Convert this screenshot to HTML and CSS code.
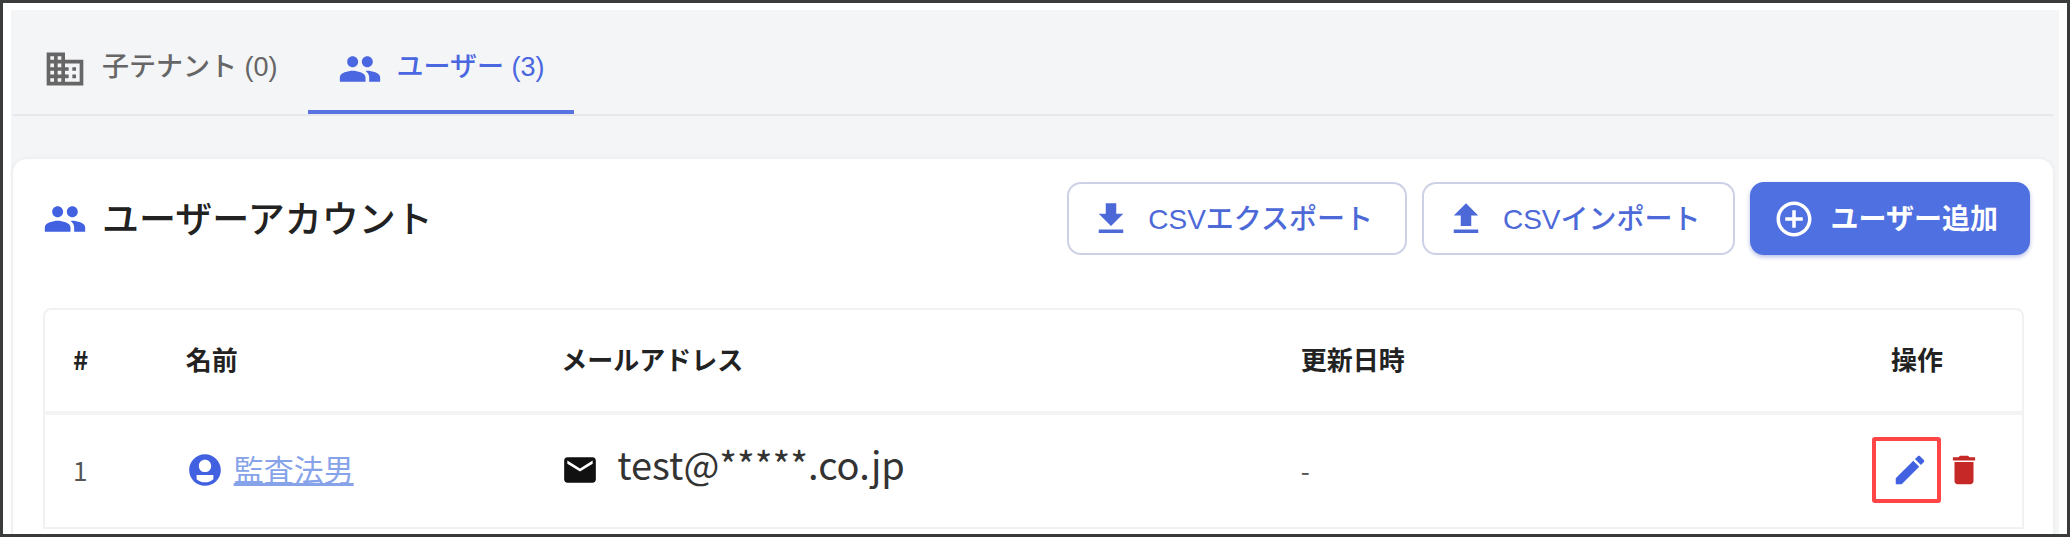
FILE: index.html
```html
<!DOCTYPE html>
<html lang="ja">
<head>
    <meta charset="UTF-8">
    <meta name="viewport" content="width=device-width, initial-scale=1.0">
    <title>ユーザーアカウント</title>
    <link rel="stylesheet" href="styles.css">
</head>
<body>
    <div class="frame">
        <div class="page">
            <nav class="tabs">
                <a class="tab" href="#tenants">
                    <svg class="icon-lg" viewBox="0 0 24 24" aria-hidden="true"><path d="M12 7V3H2v18h20V7H12zM6 19H4v-2h2v2zm0-4H4v-2h2v2zm0-4H4V9h2v2zm0-4H4V5h2v2zm4 12H8v-2h2v2zm0-4H8v-2h2v2zm0-4H8V9h2v2zm0-4H8V5h2v2zm10 12h-8v-2h2v-2h-2v-2h2v-2h-2V9h8v10zm-2-8h-2v2h2v-2zm0 4h-2v2h2v-2z"/></svg>
                    <span class="label">子テナント (0)</span>
                </a>
                <a class="tab active" href="#users" aria-current="page">
                    <svg class="icon-lg" viewBox="0 0 24 24" aria-hidden="true"><path d="M16 11c1.66 0 2.99-1.34 2.99-3S17.66 5 16 5c-1.66 0-3 1.34-3 3s1.34 3 3 3zm-8 0c1.66 0 2.99-1.34 2.99-3S9.66 5 8 5C6.34 5 5 6.34 5 8s1.34 3 3 3zm0 2c-2.33 0-7 1.17-7 3.5V19h14v-2.5c0-2.33-4.67-3.5-7-3.5zm8 0c-.29 0-.62.02-.97.05 1.16.84 1.97 1.97 1.97 3.45V19h6v-2.5c0-2.33-4.67-3.5-7-3.5z"/></svg>
                    <span class="label">ユーザー (3)</span>
                </a>
            </nav>

            <main class="card" id="users">
                <div class="card-header">
                    <h1 class="card-title">
                        <svg class="icon-lg" viewBox="0 0 24 24" aria-hidden="true"><path d="M16 11c1.66 0 2.99-1.34 2.99-3S17.66 5 16 5c-1.66 0-3 1.34-3 3s1.34 3 3 3zm-8 0c1.66 0 2.99-1.34 2.99-3S9.66 5 8 5C6.34 5 5 6.34 5 8s1.34 3 3 3zm0 2c-2.33 0-7 1.17-7 3.5V19h14v-2.5c0-2.33-4.67-3.5-7-3.5zm8 0c-.29 0-.62.02-.97.05 1.16.84 1.97 1.97 1.97 3.45V19h6v-2.5c0-2.33-4.67-3.5-7-3.5z"/></svg>
                        <span class="label">ユーザーアカウント</span>
                    </h1>
                    <div class="buttons">
                        <button class="btn" type="button">
                            <svg class="icon-md" viewBox="0 0 24 24" aria-hidden="true"><path d="M19 9h-4V3H9v6H5l7 7 7-7zM5 18v2h14v-2H5z"/></svg>
                            <span class="label">CSVエクスポート</span>
                        </button>
                        <button class="btn" type="button">
                            <svg class="icon-md" viewBox="0 0 24 24" aria-hidden="true"><path d="M9 16h6v-6h4l-7-7-7 7h4zm-4 2h14v2H5z"/></svg>
                            <span class="label">CSVインポート</span>
                        </button>
                        <button class="btn btn-primary" type="button">
                            <svg class="icon-md" viewBox="0 0 24 24" aria-hidden="true"><path d="M13 7h-2v4H7v2h4v4h2v-4h4v-2h-4V7zm-1-5C6.48 2 2 6.48 2 12s4.48 10 10 10 10-4.48 10-10S17.52 2 12 2zm0 18c-4.41 0-8-3.59-8-8s3.59-8 8-8 8 3.59 8 8-3.59 8-8 8z"/></svg>
                            <span class="label">ユーザー追加</span>
                        </button>
                    </div>
                </div>

                <div class="table-wrap">
                    <table class="users">
                        <thead>
                            <tr>
                                <th class="col-no">#</th>
                                <th class="col-name">名前</th>
                                <th class="col-mail">メールアドレス</th>
                                <th class="col-date">更新日時</th>
                                <th class="col-actions">操作</th>
                            </tr>
                        </thead>
                        <tbody>
                            <tr>
                                <td>1</td>
                                <td>
                                    <div class="cell name">
                                        <svg class="icon-sm" viewBox="0 0 24 24" aria-hidden="true"><path d="M12 2C6.48 2 2 6.48 2 12s4.48 10 10 10 10-4.48 10-10S17.52 2 12 2zm0 3.500c2.200 0 3.900 1.700 3.900 3.900s-1.700 3.900-3.900 3.900-3.900-1.700-3.900-3.900 1.700-3.900 3.900-3.900zm5.300 12.300c-1.300 1.300-3.200 2-5.300 2s-4-.7-5.300-2v-2.600h10.600z"/></svg>
                                        <a class="name-link" href="#user-1">監査法男</a>
                                    </div>
                                </td>
                                <td>
                                    <div class="cell mail">
                                        <svg class="icon-sm" viewBox="0 0 24 24" aria-hidden="true"><path d="M20 4H4c-1.100 0-1.990.9-1.990 2L2 18c0 1.100.9 2 2 2h16c1.100 0 2-.9 2-2V6c0-1.100-.9-2-2-2zm0 4l-8 5-8-5V6l8 5 8-5v2z"/></svg>
                                        <span class="mail-text">test@*****.co.jp</span>
                                    </div>
                                </td>
                                <td>-</td>
                                <td>
                                    <div class="cell actions">
                                        <button class="icon-btn edit" type="button" aria-label="編集">
                                            <svg class="icon-sm" viewBox="0 0 24 24" aria-hidden="true"><path d="M3 17.250V21h3.750L17.810 9.940l-3.750-3.750L3 17.250zM20.710 7.040c.39-.39.39-1.020 0-1.410l-2.340-2.340c-.39-.39-1.020-.39-1.410 0l-1.830 1.830 3.750 3.750 1.830-1.830z"/></svg>
                                        </button>
                                        <button class="icon-btn delete" type="button" aria-label="削除">
                                            <svg class="icon-sm" viewBox="0 0 24 24" aria-hidden="true"><path d="M6 19c0 1.100.9 2 2 2h8c1.100 0 2-.9 2-2V7H6v12zM19 4h-3.500l-1-1h-5l-1 1H5v2h14V4z"/></svg>
                                        </button>
                                    </div>
                                </td>
                            </tr>
                        </tbody>
                    </table>
                </div>
            </main>
        </div>
    </div>
</body>
</html>
```
FILE: styles.css
```css
* {
    box-sizing: border-box;
}
body {
    margin: 0;
    font-family: "Noto Sans CJK JP", sans-serif;
    font-size: 26px;
    line-height: 36px;
    color: #222;
    background: #fff;
}
svg {
    display: block;
    flex: none;
    fill: currentColor;
}
.icon-lg { width: 44px; height: 44px; }
.icon-md { width: 42px; height: 42px; }
.icon-sm { width: 38px; height: 38px; }
.label { padding-bottom: 4px; }

.frame {
    display: flex;
    min-height: 100vh;
    padding: 7px 8px 0;
    border: 3px solid #3a3b3b;
}
.page {
    flex: 1;
    display: flex;
    flex-direction: column;
    padding: 18px 6px 0 2px;
    background: #f4f5f7;
}

/* tabs */
.tabs {
    display: flex;
    border-bottom: 2px solid #e6e8eb;
}
.tab {
    display: flex;
    align-items: center;
    gap: 15px;
    height: 86px;
    padding: 0 30px;
    border-bottom: 4px solid transparent;
    color: #666;
    font-family: "Liberation Sans", "Noto Sans CJK JP", sans-serif;
    font-size: 27px;
    font-weight: 500;
    text-decoration: none;
}
.tab.active {
    color: #4a66e0;
    border-bottom-color: #5872e2;
}

/* card */
.card {
    flex: 1;
    margin-top: 43px;
    background: #fff;
    border-radius: 14px 14px 0 0;
    box-shadow: 0 0 4px rgba(60, 70, 90, 0.08);
}
.card-header {
    display: flex;
    justify-content: space-between;
    align-items: center;
    padding: 23px 23px 0 30px;
}
.card-title {
    display: flex;
    align-items: center;
    gap: 15px;
    margin: 0;
    font-size: 37px;
    font-weight: 500;
}
.card-title svg {
    color: #4161e1;
}
.buttons {
    display: flex;
    gap: 15px;
}
.btn {
    display: flex;
    align-items: center;
    gap: 16px;
    height: 73px;
    padding: 0 32px 0 21px;
    border: 2px solid #cdd1e6;
    border-radius: 14px;
    background: #fff;
    color: #4d69d8;
    font-family: "Liberation Sans", "Noto Sans CJK JP", sans-serif;
    font-size: 28px;
    font-weight: 500;
    cursor: pointer;
}
.btn-primary {
    padding-right: 30px;
    border-color: #4f70e0;
    background: #4f70e0;
    color: #fff;
    font-weight: bold;
    box-shadow: 0 2px 4px rgba(70, 90, 200, 0.4);
}

/* table */
.table-wrap {
    margin: 53px 29px 0 30px;
    border: 2px solid #f1f1f1;
    border-radius: 8px 8px 0 0;
}
.users {
    width: 100%;
    table-layout: fixed;
    border-collapse: collapse;
}
.users th,
.users td {
    padding: 0 28px 2px;
    text-align: left;
}
.users th {
    height: 103px;
    padding-bottom: 4px;
    border-bottom: 4px solid #f4f4f4;
    font-weight: bold;
}
.users td {
    height: 114px;
    color: #555;
}
.col-no { width: 5.7%; }
.col-name { width: 19%; }
.col-mail { width: 37.4%; }
.col-date { width: 28.9%; }
.users .col-actions { padding-left: 47px; }

.cell {
    display: flex;
    align-items: center;
}
.name {
    gap: 10px;
    color: #4161e1;
}
.name-link {
    padding-bottom: 4px;
    color: #86a3ea;
    font-size: 30px;
}
.mail {
    gap: 18px;
    color: #111;
}
.mail-text {
    padding-bottom: 12px;
    color: #333;
    font-size: 38px;
}
.icon-btn {
    display: flex;
    align-items: center;
    justify-content: center;
    padding: 0;
    border: 0;
    background: none;
    cursor: pointer;
}
.actions {
    gap: 4px;
}
.edit {
    width: 69px;
    height: 66px;
    padding-left: 6px;
    border: 4px solid #ff4545;
    border-radius: 3px;
    color: #4161e1;
}
.delete {
    color: #c62828;
}
```
